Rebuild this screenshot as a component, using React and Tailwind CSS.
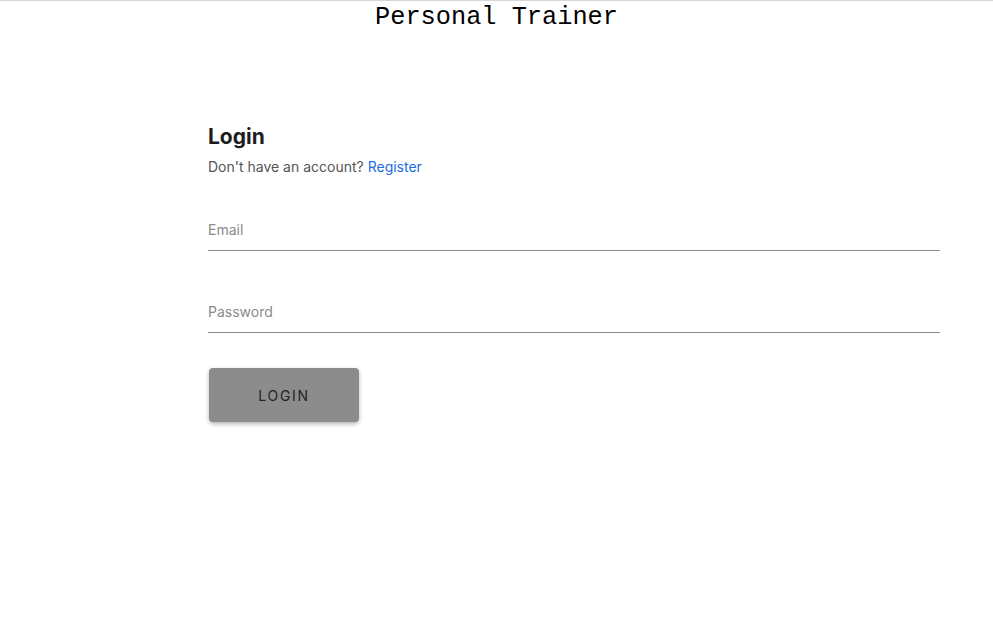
import React from "react";

const Field = ({ label, type }) => (
  <label className="block">
    <input
      type={type}
      placeholder={label}
      className="w-full border-b border-[#8c8c8c] bg-transparent pb-[10px] text-[14px] text-[#222] placeholder:text-[#8a8a8a] outline-none"
    />
  </label>
);

const App = () => {
  return (
    <div className="min-h-screen bg-white border-t border-[#d6d6d6] font-['Inter',sans-serif]">
      <h1 className="text-center font-['Liberation_Mono',monospace] text-[25.3px] leading-[34px] text-black">
        Personal Trainer
      </h1>

      <div className="ml-[208px] w-[732px] pt-[88px]">
        <h2 className="text-[21px] font-bold leading-[28px] text-[#1d1d1f]">Login</h2>
        <p className="mt-[5px] text-[14px] text-[#555]">
          Don't have an account? <a href="#" className="text-[#1a6ce0]">Register</a>
        </p>

        <form className="mt-[40px] flex flex-col gap-[48px]" onSubmit={(e) => e.preventDefault()}>
          <Field label="Email" type="email" />
          <Field label="Password" type="password" />
        </form>

        <button
          type="button"
          className="mt-[35px] ml-px h-[54px] w-[150px] rounded-[4px] bg-[#8c8c8c] text-[14px] tracking-[0.12em] text-[#222] shadow-[0_2px_4px_rgba(0,0,0,0.3)]"
        >
          LOGIN
        </button>
      </div>
    </div>
  );
};

export default App;
